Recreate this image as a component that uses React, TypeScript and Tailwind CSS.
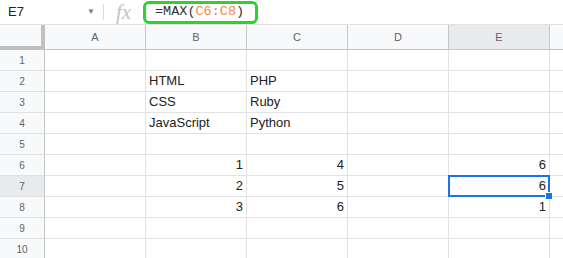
import { FunctionComponent } from "react";

const cols = ["A", "B", "C", "D", "E"];

const data: Record<number, (string | number | null)[]> = {
  2: [null, "HTML", "PHP", null, null],
  3: [null, "CSS", "Ruby", null, null],
  4: [null, "JavaScript", "Python", null, null],
  6: [null, 1, 4, null, 6],
  7: [null, 2, 5, null, 6],
  8: [null, 3, 6, null, 1],
};

const FormulaBar: FunctionComponent = () => {
  return (
    <div className="h-[25px] flex items-center border-b border-[#e1e1e1] bg-white">
      <div className="w-[103px] h-full flex items-center justify-between pl-[8px] pr-[8px]">
        <span className="text-[13px] text-[#222]">E7</span>
        <span className="text-[8px] text-[#777]">▼</span>
      </div>
      <div className="w-px h-[16px] bg-[#dadce0]" />
      <div className="w-[39px] flex items-center justify-center">
        <span className="text-[21px] italic text-[#c4c4c4] font-['Liberation_Serif',serif] leading-none">
          fx
        </span>
      </div>
      <div className="h-[23px] w-[115px] mt-[1px] rounded-[6px] border-[3px] border-[#2fd12f] flex items-center pl-[9px] font-['Liberation_Mono',monospace] text-[13.5px] text-[#333]">
        =MAX(<span className="text-[#ec8b4e]">C6:C8</span>)
      </div>
    </div>
  );
};

const HeaderRow: FunctionComponent = () => {
  return (
    <div className="grid grid-cols-[45px_repeat(5,101px)_1fr] h-[25px]">
      <div className="bg-[#f8f9fa] border-r-[4px] border-b-[4px] border-[#c0c0c0]" />
      {cols.map((c) => (
        <div
          key={c}
          className={`flex items-center justify-center border-r border-b border-[#c4c7c5] text-[11px] text-[#5f6368] ${
            c === "E" ? "bg-[#e8eaed]" : "bg-[#f8f9fa]"
          }`}
        >
          {c}
        </div>
      ))}
      <div className="bg-[#f8f9fa] border-b border-[#c4c7c5]" />
    </div>
  );
};

const Row: FunctionComponent<{ n: number }> = ({ n }) => {
  const cells = data[n] ?? [null, null, null, null, null];
  return (
    <div className="grid grid-cols-[45px_repeat(5,101px)_1fr] h-[21px]">
      <div
        className={`flex items-center justify-center border-r border-b border-r-[#c4c7c5] border-b-[#e1e1e1] text-[10px] text-[#5f6368] ${
          n === 7 ? "bg-[#e8eaed]" : "bg-[#f8f9fa]"
        }`}
      >
        {n}
      </div>
      {cells.map((v, i) => {
        const selected = n === 7 && i === 4;
        return (
          <div
            key={i}
            className={`relative flex items-center px-[3px] border-r border-b border-[#e2e2e3] text-[13px] text-[#222] ${
              typeof v === "number" ? "justify-end" : "justify-start"
            } ${selected ? "z-10" : ""}`}
          >
            {v}
            {selected && (
              <>
                <div className="absolute left-[-1px] top-[-1px] w-[102px] h-[22px] border-2 border-[#1a73e8]" />
                <div className="absolute right-[-4px] bottom-[-4px] w-[6px] h-[6px] bg-[#1a73e8] border border-white box-content" />
              </>
            )}
          </div>
        );
      })}
      <div className="border-b border-[#e2e2e3]" />
    </div>
  );
};

export default function App() {
  return (
    <div className="w-[563px] h-[258px] overflow-hidden bg-white font-['Liberation_Sans',Arial,sans-serif]">
      <FormulaBar />
      <HeaderRow />
      {[1, 2, 3, 4, 5, 6, 7, 8, 9, 10].map((n) => (
        <Row key={n} n={n} />
      ))}
    </div>
  );
}
